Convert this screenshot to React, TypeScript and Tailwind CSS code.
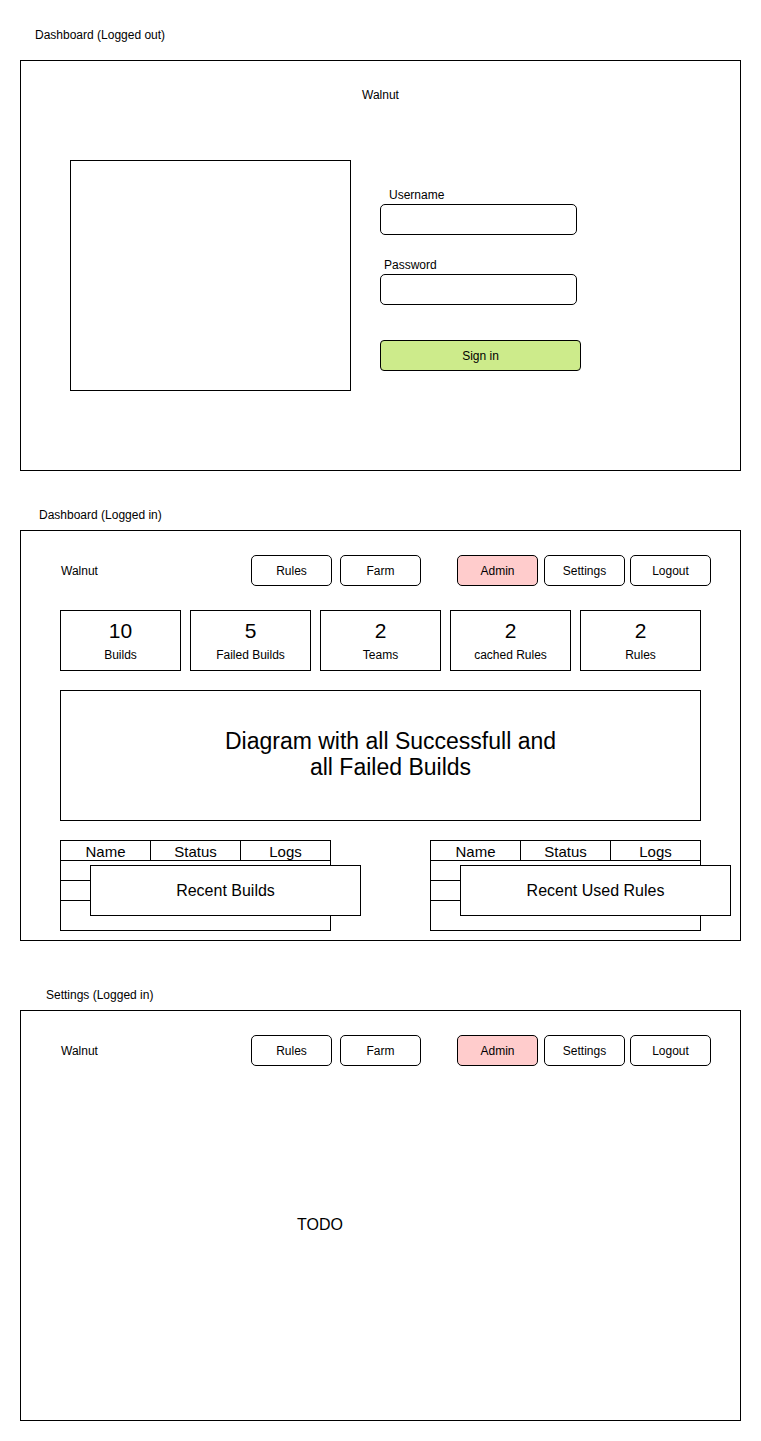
import React from 'react';

const font = "font-['Liberation_Sans',Arial,Helvetica,sans-serif]";

const NavButton = ({ label, className }: { label: string; className?: string }) => (
  <div
    className={`w-[81px] h-[31px] flex items-center justify-center border border-black rounded-[5px] text-[12px] ${className ?? ''}`}
  >
    {label}
  </div>
);

const NavBar = () => (
  <div className="flex items-center h-[31px] pl-[40px]">
    <div className="w-[190px] text-[12px]">Walnut</div>
    <NavButton label="Rules" />
    <NavButton label="Farm" className="ml-[8px]" />
    <NavButton label="Admin" className="ml-[36px] bg-[#ffcccc]" />
    <NavButton label="Settings" className="ml-[6px]" />
    <NavButton label="Logout" className="ml-[5px]" />
  </div>
);

const Stat = ({ value, label }: { value: number; label: string }) => (
  <div className="w-[121px] h-[61px] border border-black flex flex-col items-center justify-center">
    <div className="text-[21px] leading-[22px]">{value}</div>
    <div className="text-[12px] leading-[14px] mt-[6px]">{label}</div>
  </div>
);

const RecentTable = ({ title }: { title: string }) => (
  <div className="relative w-[271px] h-[91px]">
    <div className="w-full h-full border border-black flex flex-col">
      <div className="h-[20px] flex border-b border-black text-[15px] leading-[22px]">
        <div className="w-[90px] border-r border-black text-center">Name</div>
        <div className="w-[90px] border-r border-black text-center">Status</div>
        <div className="flex-1 text-center">Logs</div>
      </div>
      <div className="h-[20px] border-b border-black" />
      <div className="h-[20px] border-b border-black" />
      <div className="flex-1" />
    </div>
    <div className="absolute left-[30px] top-[25px] w-[271px] h-[51px] bg-white border border-black flex items-center justify-center text-[16px]">
      {title}
    </div>
  </div>
);

const Title = ({ text, className }: { text: string; className: string }) => (
  <div className={`text-[12px] leading-[14px] ${className}`}>{text}</div>
);

export default function App() {
  return (
    <div className={`w-[761px] min-h-[1441px] bg-white text-black ${font}`}>
      {/* logged out */}
      <Title text="Dashboard (Logged out)" className="h-[60px] pt-[28px] pl-[35px]" />
      <div className="mx-[20px] h-[411px] border border-black">
        <div className="pt-[27px] text-center text-[12px] leading-[14px]">Walnut</div>
        <div className="flex mt-[58px] ml-[49px]">
          <div className="w-[281px] h-[231px] border border-black" />
          <div className="ml-[29px] flex flex-col text-[12px] leading-[14px]">
            <label className="pt-[28px] pl-[9px]">Username</label>
            <div className="mt-[2px] w-[197px] h-[31px] border border-black rounded-[5px]" />
            <label className="mt-[23px] pl-[4px]">Password</label>
            <div className="mt-[2px] w-[197px] h-[31px] border border-black rounded-[5px]" />
            <div className="mt-[35px] w-[201px] h-[31px] border border-black rounded-[4px] bg-[#cdeb8b] flex items-center justify-center">
              Sign in
            </div>
          </div>
        </div>
      </div>

      {/* logged in */}
      <Title text="Dashboard (Logged in)" className="h-[59px] pt-[37px] pl-[39px]" />
      <div className="mx-[20px] h-[411px] border border-black">
        <div className="pt-[24px]">
          <NavBar />
        </div>
        <div className="flex gap-[9px] mt-[24px] pl-[39px]">
          <Stat value={10} label="Builds" />
          <Stat value={5} label="Failed Builds" />
          <Stat value={2} label="Teams" />
          <Stat value={2} label="cached Rules" />
          <Stat value={2} label="Rules" />
        </div>
        <div className="mt-[19px] ml-[39px] w-[641px] h-[131px] border border-black flex items-center justify-center text-center text-[23px] leading-[26px] pl-[20px] pb-[4px]">
          Diagram with all Successfull and
          <br />
          all Failed Builds
        </div>
        <div className="flex gap-[99px] mt-[19px] ml-[39px]">
          <RecentTable title="Recent Builds" />
          <RecentTable title="Recent Used Rules" />
        </div>
      </div>

      {/* settings */}
      <Title text="Settings (Logged in)" className="h-[69px] pt-[47px] pl-[46px]" />
      <div className="mx-[20px] h-[411px] border border-black">
        <div className="pt-[24px]">
          <NavBar />
        </div>
        <div className="mt-[150px] ml-[276px] text-[16px] leading-[18px]">TODO</div>
      </div>
    </div>
  );
}
